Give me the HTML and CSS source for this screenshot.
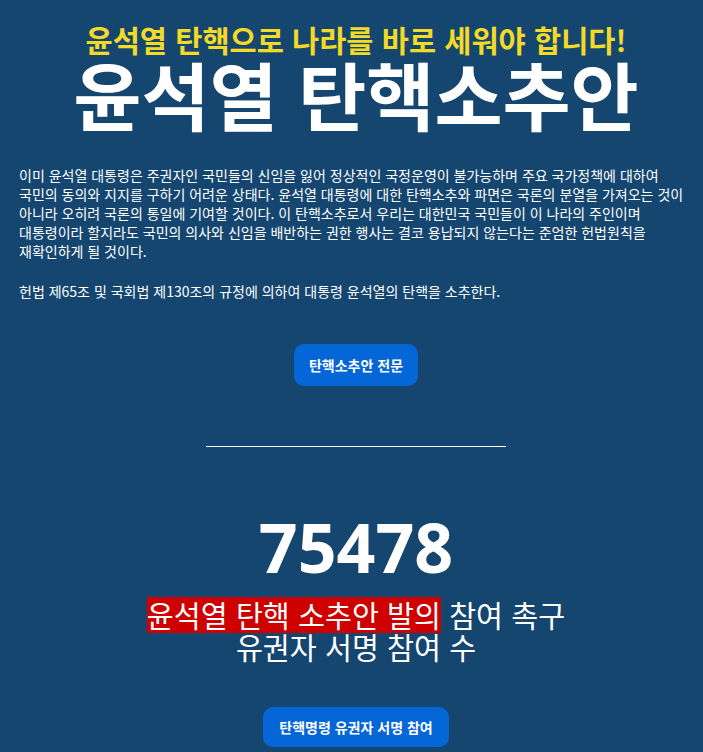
FILE: index.html
```html
<!DOCTYPE html>
<html lang="ko">
<head>
<meta charset="utf-8">
<title>윤석열 탄핵소추안</title>
<link rel="stylesheet" href="styles.css">
</head>
<body>
<main class="page">
  <h2 class="slogan">윤석열 탄핵으로 나라를 바로 세워야 합니다!</h2>
  <h1 class="title">윤석열 탄핵소추안</h1>
  <p class="lead">이미 윤석열 대통령은 주권자인 국민들의 신임을 잃어 정상적인 국정운영이 불가능하며 주요 국가정책에 대하여 국민의 동의와 지지를 구하기 어려운 상태다. 윤석열 대통령에 대한 탄핵소추와 파면은 국론의 분열을 가져오는 것이 아니라 오히려 국론의 통일에 기여할 것이다. 이 탄핵소추로서 우리는 대한민국 국민들이 이 나라의 주인이며 대통령이라 할지라도 국민의 의사와 신임을 배반하는 권한 행사는 결코 용납되지 않는다는 준엄한 헌법원칙을 재확인하게 될 것이다.</p>
  <p class="lead second">헌법 제65조 및 국회법 제130조의 규정에 의하여 대통령 윤석열의 탄핵을 소추한다.</p>
  <div class="actions first-action">
    <a class="btn" href="#">탄핵소추안 전문</a>
  </div>
  <hr class="divider">
  <div class="count">75478</div>
  <p class="count-label"><span class="mark">윤석열 탄핵 소추안 발의</span> 참여 촉구<br>유권자 서명 참여 수</p>
  <div class="actions second-action">
    <a class="btn btn-wide" href="#">탄핵명령 유권자 서명 참여</a>
  </div>
</main>
</body>
</html>
```
FILE: styles.css
```css
html, body {
  margin: 0;
  padding: 0;
  background: #154670;
}
body {
  font-family: "Noto Sans CJK KR", "Noto Sans", sans-serif;
  color: #ffffff;
  word-break: keep-all;
}
.page {
  display: flex;
  flex-direction: column;
  align-items: center;
  padding: 0 10px 0 19px;
  min-height: 752px;
  box-sizing: border-box;
}
.slogan {
  margin: 22px 0 0;
  font-size: 29.5px;
  line-height: 34px;
  font-weight: 700;
  color: #f2da27;
  text-align: center;
}
.title {
  margin: 0;
  font-size: 74px;
  line-height: 74px;
  font-weight: 700;
  color: #ffffff;
  text-align: center;
}
.lead {
  align-self: stretch;
  margin: 36px 0 0;
  font-size: 14px;
  line-height: 19px;
  text-align: left;
}
.lead.second {
  margin-top: 21px;
}
.actions {
  display: flex;
  justify-content: center;
}
.first-action {
  margin-top: 43px;
}
.btn {
  display: inline-flex;
  align-items: center;
  justify-content: center;
  height: 42px;
  padding: 0 15px;
  box-sizing: border-box;
  border-radius: 10px;
  background: #0566d8;
  color: #ffffff;
  font-size: 14px;
  font-weight: 700;
  text-decoration: none;
}
.btn-wide {
  height: 40px;
  padding: 0 16px;
}
.divider {
  width: 300px;
  margin: 60px 0 0;
  border: 0;
  border-top: 1px solid #ffffff;
  height: 0;
}
.count {
  margin-top: 60px;
  font-family: "Noto Sans", "Open Sans", sans-serif;
  font-size: 68px;
  line-height: 80px;
  font-weight: 700;
  text-align: center;
}
.count-label {
  margin: 11px 0 0;
  font-size: 29.3px;
  line-height: 32px;
  text-align: center;
}
.mark {
  background: linear-gradient(to bottom, transparent 4px, #cf0000 4px, #cf0000 calc(100% - 2px), transparent calc(100% - 2px));
}
.second-action {
  margin-top: 45px;
}
```
